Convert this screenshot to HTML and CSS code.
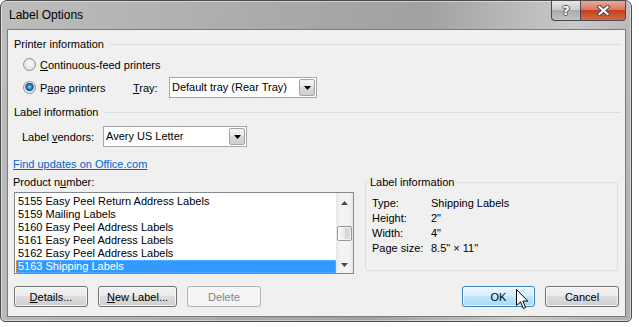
FILE: index.html
```html
<!DOCTYPE html>
<html lang="en">
<head>
    <meta charset="UTF-8">
    <meta name="viewport" content="width=device-width, initial-scale=1.0">
    <title>Label Options</title>
    <link rel="stylesheet" href="styles.css">
</head>
<body>
    <div class="window">
        <div class="titlebar">
            <span class="title">Label Options</span>
            <div class="caption-buttons">
                <span class="cap cap-help">?</span>
                <span class="cap cap-close">
                    <svg width="13" height="11" viewBox="0 0 13 11">
                        <path d="M2.5 2 L10.5 9 M10.5 2 L2.5 9" stroke="#474747" stroke-width="4.2" stroke-linecap="square"/>
                        <path d="M2.5 2 L10.5 9 M10.5 2 L2.5 9" stroke="#fff" stroke-width="2.2" stroke-linecap="square"/>
                    </svg>
                </span>
            </div>
        </div>

        <div class="client">
            <div class="section-head"><span>Printer information</span></div>

            <div class="radio-row">
                <span class="radio"></span>
                <span><u>C</u>ontinuous-feed printers</span>
            </div>

            <div class="radio-row tray-row">
                <div class="radio-option">
                    <span class="radio checked"></span>
                    <span>P<u>a</u>ge printers</span>
                </div>
                <span class="tray-label"><u>T</u>ray:</span>
                <div class="combo tray-combo">
                    <span class="combo-text">Default tray (Rear Tray)</span>
                    <span class="combo-btn">
                        <svg width="7" height="4" viewBox="0 0 7 4"><polygon points="0,0 7,0 3.5,4" fill="#000"/></svg>
                    </span>
                </div>
            </div>

            <div class="section-head"><span>Label information</span></div>

            <div class="vendor-row">
                <span class="vendor-label">Label <u>v</u>endors:</span>
                <div class="combo vendor-combo">
                    <span class="combo-text">Avery US Letter</span>
                    <span class="combo-btn">
                        <svg width="7" height="4" viewBox="0 0 7 4"><polygon points="0,0 7,0 3.5,4" fill="#000"/></svg>
                    </span>
                </div>
            </div>

            <a href="#" class="link">Find updates on Office.com</a>

            <div class="product-area">
                <div class="product-col">
                    <div class="product-label">Product n<u>u</u>mber:</div>
                    <div class="listbox">
                        <div class="list-items">
                            <div class="item">5155 Easy Peel Return Address Labels</div>
                            <div class="item">5159 Mailing Labels</div>
                            <div class="item">5160 Easy Peel Address Labels</div>
                            <div class="item">5161 Easy Peel Address Labels</div>
                            <div class="item">5162 Easy Peel Address Labels</div>
                            <div class="item selected">5163 Shipping Labels</div>
                        </div>
                        <div class="scrollbar">
                            <span class="sb-btn">
                                <svg width="7" height="4" viewBox="0 0 7 4"><polygon points="0,4 7,4 3.5,0" fill="#4a4a4a"/></svg>
                            </span>
                            <span class="sb-thumb"></span>
                            <span class="sb-btn sb-down">
                                <svg width="7" height="4" viewBox="0 0 7 4"><polygon points="0,0 7,0 3.5,4" fill="#4a4a4a"/></svg>
                            </span>
                        </div>
                    </div>
                </div>

                <fieldset class="info-box">
                    <legend>Label information</legend>
                    <div class="info-row"><span class="info-key">Type:</span><span>Shipping Labels</span></div>
                    <div class="info-row"><span class="info-key">Height:</span><span>2"</span></div>
                    <div class="info-row"><span class="info-key">Width:</span><span>4"</span></div>
                    <div class="info-row"><span class="info-key">Page size:</span><span>8.5" × 11"</span></div>
                </fieldset>
            </div>

            <div class="button-row">
                <button class="btn btn-details"><u>D</u>etails...</button>
                <button class="btn btn-new"><u>N</u>ew Label...</button>
                <button class="btn btn-delete" disabled>Delete</button>
                <button class="btn btn-ok">OK</button>
                <button class="btn btn-cancel">Cancel</button>
            </div>
        </div>
    </div>

    <svg class="cursor" width="13" height="21" viewBox="0 0 13 21">
        <path d="M0.5 0.5 V16.5 L4.5 12.8 L7.3 19.5 L9.6 18.5 L6.9 12.1 H11.8 Z" fill="#fff" stroke="#000" stroke-linejoin="miter"/>
    </svg>
</body>
</html>
```

FILE: styles.css
```css
* {
    box-sizing: border-box;
}
body {
    margin: 0;
    background: #fff;
    font-family: "Liberation Sans", Arial, sans-serif;
    font-size: 11px;
    color: #000;
}
u {
    text-underline-offset: 1px;
}

/* window frame */
.window {
    width: 632px;
    height: 322px;
    border: 1px solid #4c4c4c;
    border-radius: 7px 7px 5px 5px;
    background: linear-gradient(100deg, #bdbdbd 0%, #aaaaaa 40%, #a1a1a1 62%, #c9c9c9 84%, #adadad 100%);
    box-shadow: inset 0 0 0 1px rgba(255, 255, 255, 0.45);
    display: flex;
    flex-direction: column;
}
.titlebar {
    height: 28px;
    display: flex;
    align-items: flex-start;
    padding: 0 5px 0 8px;
}
.title {
    font-size: 12px;
    line-height: 15px;
    margin-top: 7px;
}
.caption-buttons {
    margin-left: auto;
    display: flex;
}
.cap {
    height: 20px;
    border: 1px solid #4a4a4a;
    border-top: none;
    display: flex;
    align-items: center;
    justify-content: center;
}
.cap-help {
    width: 29px;
    border-right: none;
    border-radius: 0 0 0 4px;
    background: linear-gradient(#e6e6e6, #cdcdcd 45%, #aaaaaa 50%, #c2c2c2);
    color: #fff;
    font-family: "DejaVu Sans", sans-serif;
    font-weight: bold;
    font-size: 13px;
    text-shadow: 1px 0 #555, -1px 0 #555, 0 1px #555, 0 -1px #555;
}
.cap-close {
    width: 46px;
    border-radius: 0 0 4px 0;
    background: linear-gradient(#e9a898, #d77a63 45%, #c3421f 50%, #d4684c);
}

/* client area */
.client {
    flex: 1;
    margin: 0 5px 4px 6px;
    background: #f0f0f0;
    border: 1px solid #7b7b7b;
    padding: 0 5px;
}
.section-head {
    display: flex;
    align-items: center;
    margin: 7px 0 0 1px;
    line-height: 15px;
}
.section-head::after {
    content: "";
    flex: 1;
    margin-left: 6px;
    border-top: 1px solid #d5dfe5;
}
.radio-row {
    display: flex;
    align-items: center;
    margin: 5px 0 0 10px;
    height: 15px;
}
.tray-row {
    height: 21px;
}
.radio-option {
    display: flex;
    align-items: center;
    width: 110px;
}
.radio {
    width: 13px;
    height: 13px;
    flex: none;
    margin-right: 4px;
    border-radius: 50%;
    border: 1px solid #8e8f8f;
    background: radial-gradient(circle at 50% 40%, #fbfbfb, #e2e2e2 70%, #d0d0d0);
}
.radio.checked {
    background: radial-gradient(circle at 50% 45%, #a6e2fc 0, #3a9ddf 1.5px, #1467ad 3px, #24507c 3.8px, #e4e4e4 4.5px, #f6f6f6 100%);
}
.tray-label {
    width: 36px;
}
.combo {
    display: flex;
    height: 21px;
    padding: 1px;
    border: 1px solid #a7a7a7;
    background: #fff;
}
.tray-combo {
    width: 148px;
}
.vendor-combo {
    width: 144px;
}
.combo-text {
    flex: 1;
    line-height: 17px;
    padding-left: 1px;
}
.combo-btn {
    width: 16px;
    display: flex;
    align-items: center;
    justify-content: center;
    border: 1px solid #a4a4a4;
    border-radius: 2px;
    background: linear-gradient(#f5f5f5, #e8e8e8 50%, #d9d9d9 50%, #cfcfcf);
}
.vendor-row {
    display: flex;
    align-items: center;
    margin: 6px 0 0 9px;
}
.vendor-label {
    width: 81px;
}
.link {
    display: block;
    width: max-content;
    margin-top: 10px;
    line-height: 15px;
    color: #0066cc;
}

/* product list + details */
.product-area {
    display: flex;
    align-items: flex-start;
    margin-top: 3px;
}
.product-col {
    width: 341px;
}
.product-label {
    line-height: 15px;
}
.listbox {
    display: flex;
    width: 340px;
    height: 82px;
    margin: 2px 0 0 1px;
    border: 1px solid #828790;
    background: #fff;
}
.list-items {
    flex: 1;
    padding: 2px 0 0 1px;
}
.item {
    height: 13px;
    line-height: 13px;
    padding-left: 2px;
    white-space: nowrap;
}
.item.selected {
    background: #3399ff;
    color: #fff;
    outline: 1px dotted #e8a058;
    outline-offset: -1px;
}
.scrollbar {
    width: 17px;
    display: flex;
    flex-direction: column;
    background: linear-gradient(to right, #e6e6e6, #f3f3f3 25%, #f3f3f3 75%, #e9e9e9);
}
.sb-btn {
    height: 17px;
    display: flex;
    align-items: center;
    justify-content: center;
    padding-top: 2px;
}
.sb-down {
    margin-top: auto;
    padding-top: 0;
}
.sb-thumb {
    height: 15px;
    margin: 16px 1px 0;
    border: 1px solid #979797;
    border-radius: 2px;
    background: linear-gradient(to right, #f6f6f6, #e8e8e8 50%, #d5d5d5 50%, #dcdcdc);
    box-shadow: inset 0 0 0 1px rgba(255, 255, 255, 0.7);
}
.info-box {
    width: 253px;
    margin: 0 0 0 11px;
    padding: 6px 0 14px 0;
    border: 1px solid #d5dfe5;
    border-radius: 3px;
    min-inline-size: 0;
}
.info-box legend {
    margin-left: 3px;
    padding: 0 1px;
    line-height: 15px;
}
.info-row {
    display: flex;
    margin-left: 6px;
    line-height: 15px;
}
.info-key {
    width: 59px;
}

/* buttons */
.button-row {
    display: flex;
    margin: 12px 1px 0 1px;
}
.btn {
    height: 21px;
    padding: 0;
    margin-left: 10px;
    font: inherit;
    color: #000;
    border: 1px solid #707070;
    border-radius: 3px;
    background: linear-gradient(#f2f2f2, #ebebeb 45%, #dddddd 50%, #cfcfcf);
    box-shadow: inset 0 0 0 1px rgba(255, 255, 255, 0.75);
}
.btn-details {
    width: 74px;
    margin-left: 0;
}
.btn-new {
    width: 79px;
}
.btn-delete {
    width: 74px;
    color: #838383;
    border-color: #adb2b5;
    background: #f4f4f4;
    box-shadow: none;
}
.btn-ok {
    width: 73px;
    margin-left: auto;
    border-color: #3c7fb1;
    background: linear-gradient(#eaf6fd, #d9f0fc 45%, #bee6fd 50%, #a7d9f5);
}
.btn-cancel {
    width: 74px;
}

.cursor {
    position: absolute;
    left: 516px;
    top: 289px;
}
```
